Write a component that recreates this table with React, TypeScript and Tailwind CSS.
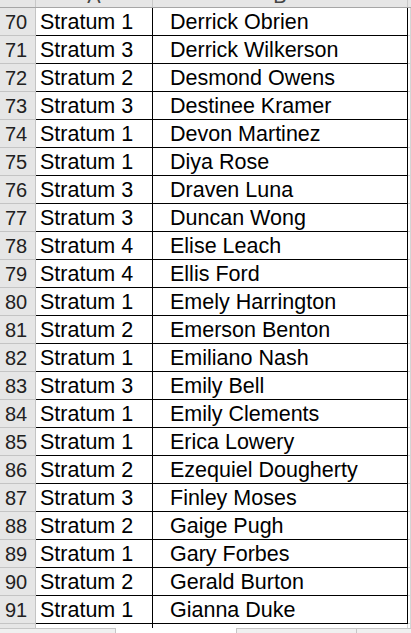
import React from 'react';

// Visible slice of the sheet: row number, stratum (col A), name (col B).
const ROWS: [number, string, string][] = [
  [70, 'Stratum 1', 'Derrick Obrien'],
  [71, 'Stratum 3', 'Derrick Wilkerson'],
  [72, 'Stratum 2', 'Desmond Owens'],
  [73, 'Stratum 3', 'Destinee Kramer'],
  [74, 'Stratum 1', 'Devon Martinez'],
  [75, 'Stratum 1', 'Diya Rose'],
  [76, 'Stratum 3', 'Draven Luna'],
  [77, 'Stratum 3', 'Duncan Wong'],
  [78, 'Stratum 4', 'Elise Leach'],
  [79, 'Stratum 4', 'Ellis Ford'],
  [80, 'Stratum 1', 'Emely Harrington'],
  [81, 'Stratum 2', 'Emerson Benton'],
  [82, 'Stratum 1', 'Emiliano Nash'],
  [83, 'Stratum 3', 'Emily Bell'],
  [84, 'Stratum 1', 'Emily Clements'],
  [85, 'Stratum 1', 'Erica Lowery'],
  [86, 'Stratum 2', 'Ezequiel Dougherty'],
  [87, 'Stratum 3', 'Finley Moses'],
  [88, 'Stratum 2', 'Gaige Pugh'],
  [89, 'Stratum 1', 'Gary Forbes'],
  [90, 'Stratum 2', 'Gerald Burton'],
  [91, 'Stratum 1', 'Gianna Duke'],
];

const FONT = { fontFamily: '"Liberation Sans", Arial, sans-serif' };

function ColumnHeader(): React.ReactElement {
  // Scrolled so only the bottom few pixels of the A / B letters peek in.
  return (
    <div className="flex h-[8px] overflow-hidden border-b border-[#a6a6a6] bg-[#e6e6e6] text-[20px] leading-[20px] text-[#444]">
      <div className="w-[36px] shrink-0 border-r border-[#c8c8c8]" />
      <div className="w-[117px] shrink-0 border-r border-[#c8c8c8] text-center">
        <div className="mt-[-14px]">A</div>
      </div>
      <div className="w-[255px] shrink-0 border-r border-[#c8c8c8] text-center">
        <div className="mt-[-14px]">B</div>
      </div>
      <div className="flex-1" />
    </div>
  );
}

function Row({ n, a, b }: { n: number; a: string; b: string }): React.ReactElement {
  return (
    <div className="flex h-[28px] leading-[29px]">
      <div className="w-[36px] shrink-0 border-b border-r border-[#c4c4c4] bg-[#e6e6e6] pr-[3px] text-center text-[20px] text-[#222]">
        {n}
      </div>
      <div className="w-[117px] shrink-0 border-b border-r border-black pl-[4px] text-[21.5px] text-black">
        {a}
      </div>
      <div className="w-[255px] shrink-0 border-b border-r border-black pl-[17px] text-[21.5px] text-black">
        {b}
      </div>
      <div className="flex-1 border-b border-r border-[#d4d4d4]" />
    </div>
  );
}

export default function App(): React.ReactElement {
  return (
    <div className="h-[633px] w-[411px] overflow-hidden bg-white" style={FONT}>
      <ColumnHeader />
      {ROWS.map(([n, a, b]) => (
        <Row key={n} n={n} a={a} b={b} />
      ))}
      {/* partial row 92 cut by the sheet bar */}
      <div className="flex h-[4px]">
        <div className="w-[36px] shrink-0 border-r border-[#c4c4c4] bg-[#e6e6e6]" />
        <div className="w-[117px] shrink-0 border-r border-black" />
        <div className="w-[255px] shrink-0 border-r border-[#d4d4d4]" />
        <div className="flex-1 border-r border-[#d4d4d4]" />
      </div>
      {/* sheet tabs / horizontal scrollbar strip */}
      <div className="flex h-[9px]">
        <div className="w-[116px] shrink-0 border-r border-t border-[#c6c6c6] bg-[#f0f0f0]" />
        <div className="w-[120px] shrink-0 bg-white" />
        <div className="flex flex-1 border-l border-t border-[#c6c6c6] bg-[#f0f0f0]">
          <div className="w-[120px] shrink-0 border-r border-[#c6c6c6]" />
          <div className="flex-1" />
        </div>
      </div>
    </div>
  );
}
